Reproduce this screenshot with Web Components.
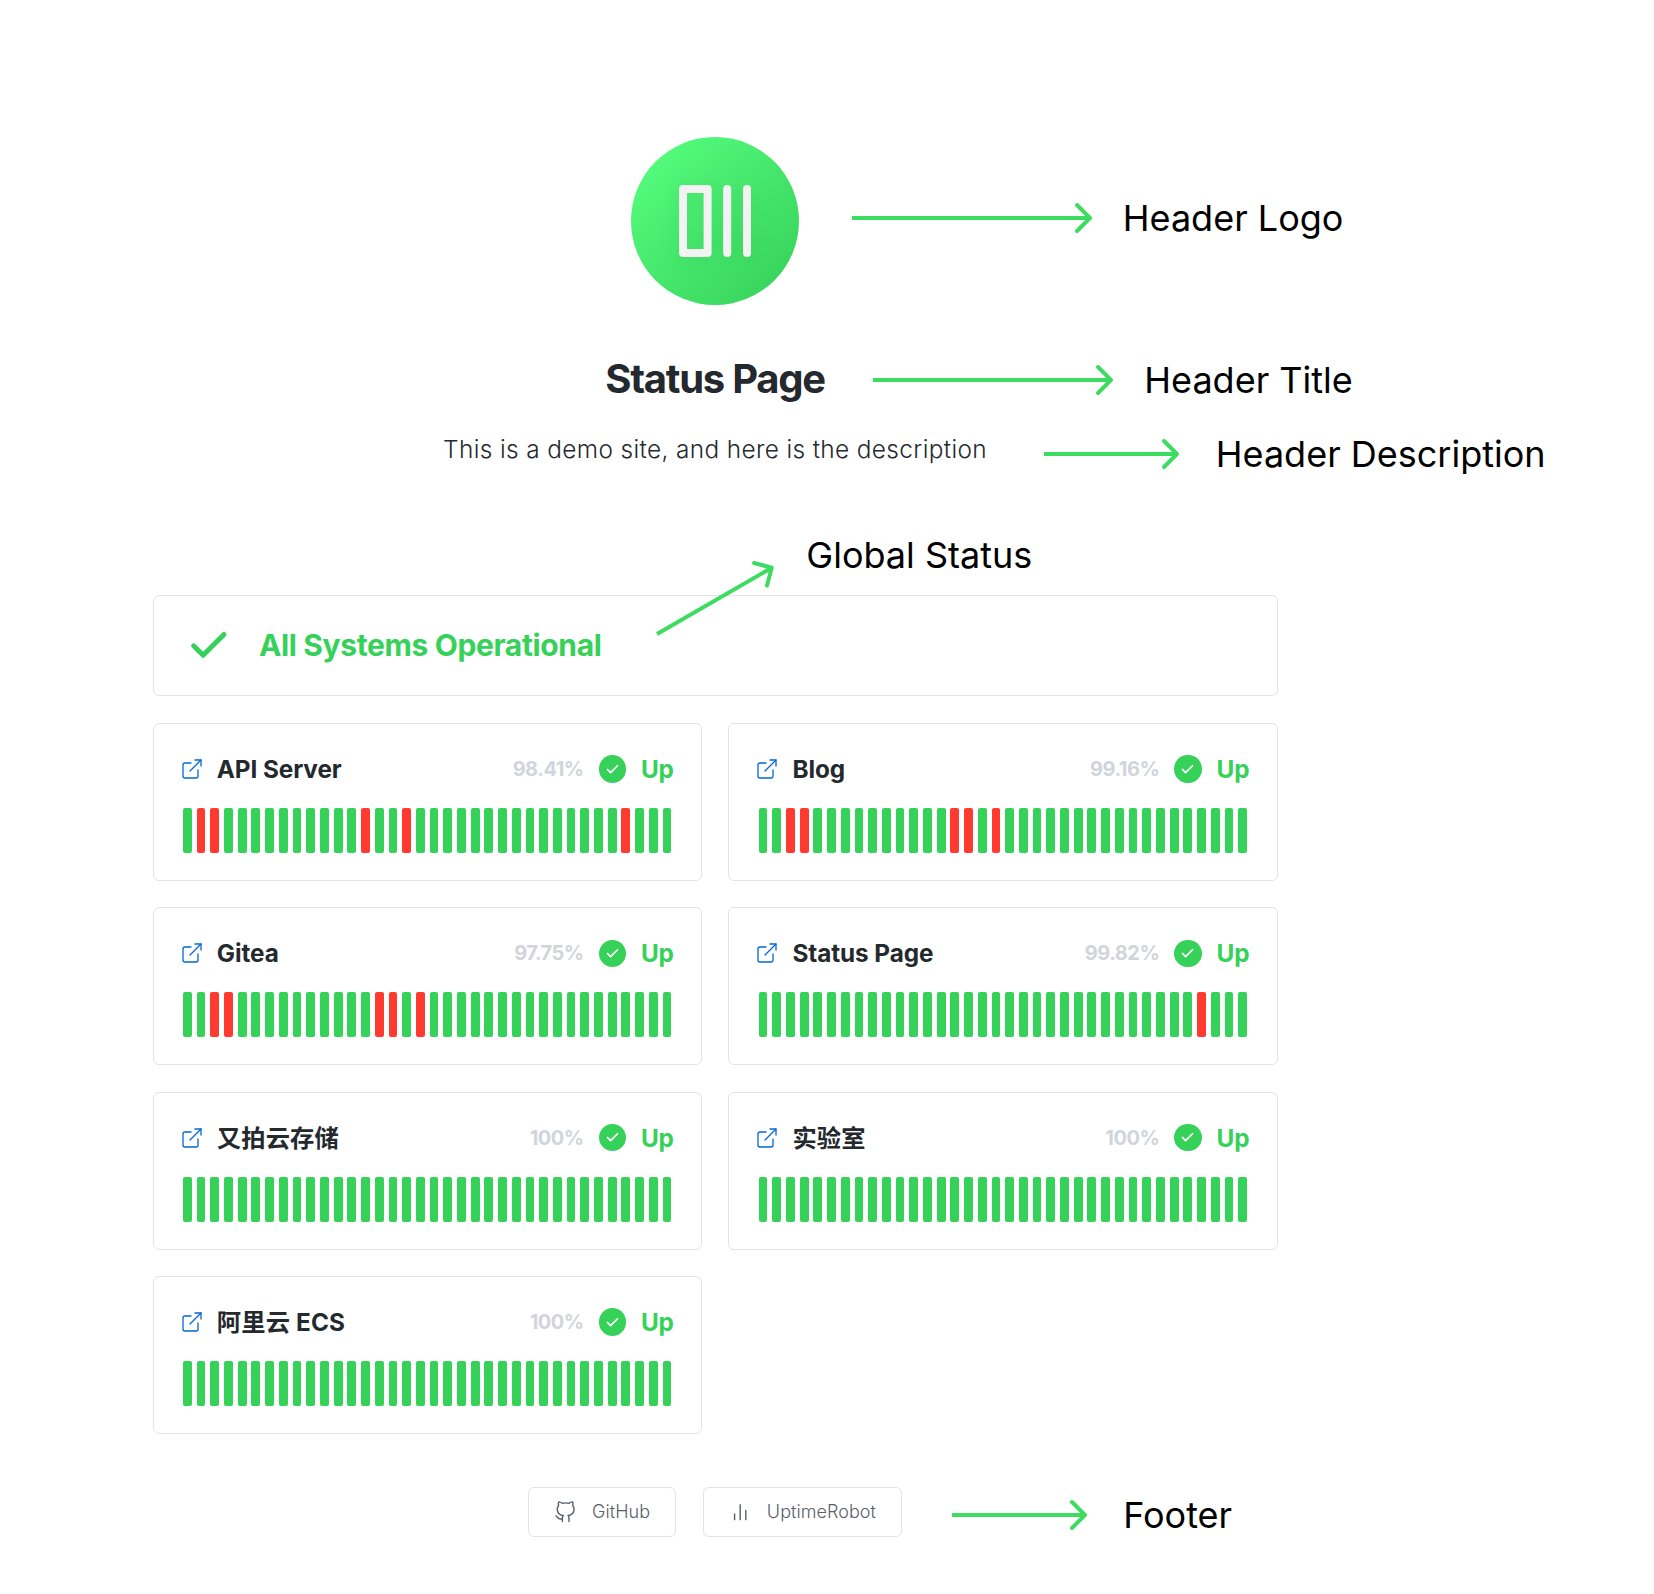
<!DOCTYPE html>
<html lang="en">
<head>
<meta charset="utf-8">
<title>Status Page</title>
<style>
html, body { margin: 0; padding: 0; background: #fff; }
body { font-family: Inter, "Noto Sans CJK SC", sans-serif; color: #24292e; --green: #36d159; --line: #e1e4e8; }
</style>
</head>
<body>
<status-page></status-page>
<script>
const define = (name, html, init) => customElements.define(name, class extends HTMLElement {
  connectedCallback() {
    if (this.shadowRoot) return;
    const root = this.attachShadow({ mode: 'open' });
    const t = document.createElement('template');
    t.innerHTML = html;
    root.append(t.content.cloneNode(true));
    if (init) init(this, root);
  }
});

const ICONS = {
  link: '<path d="M18 13v6a2 2 0 0 1-2 2H5a2 2 0 0 1-2-2V8a2 2 0 0 1 2-2h6"/><path d="M15 3h6v6"/><path d="M10 14 21 3"/>',
  check: '<path d="M20 6 9 17l-5-5"/>',
  github: '<path d="M9 19c-5 1.5-5-2.5-7-3m14 6v-3.87a3.37 3.37 0 0 0-.94-2.61c3.14-.35 6.44-1.54 6.44-7A5.44 5.44 0 0 0 20 4.77 5.07 5.07 0 0 0 19.91 1S18.73.65 16 2.48a13.38 13.38 0 0 0-7 0C6.27.65 5.09 1 5.09 1A5.07 5.07 0 0 0 5 4.77a5.44 5.44 0 0 0-1.5 3.78c0 5.42 3.3 6.61 6.44 7A3.37 3.37 0 0 0 9 18.13V22"/>',
  chart: '<path d="M18 20V10M12 20V4M6 20v-6"/>'
};

define('line-icon', `<style>
:host { display: inline-flex; flex: none; }
svg { display: block; width: 100%; height: 100%; fill: none; stroke: currentColor; stroke-linecap: round; stroke-linejoin: round; }
</style><svg viewBox="0 0 24 24"></svg>`, (el, root) => {
  const svg = root.querySelector('svg');
  svg.innerHTML = ICONS[el.getAttribute('name')];
  svg.style.strokeWidth = el.getAttribute('weight') || '1.5';
});

define('page-header', `<style>
:host { display: flex; flex-direction: column; align-items: center; }
.logo { width: 168px; height: 168px; border-radius: 50%; background: linear-gradient(135deg, #56ff80 4%, #36d159 96%);
  display: flex; align-items: center; justify-content: center; }
.logo svg { display: block; overflow: visible; filter: drop-shadow(0 1px 10px rgba(30,150,60,.16)); }
h1 { margin: 50px 0 0; font-size: 40px; line-height: 48px; font-weight: 700; letter-spacing: -1.26px; }
p { margin: 31px 0 0; font-size: 24.4px; line-height: 30px; font-weight: 350; letter-spacing: .37px; }
</style>
<div class="logo"><svg width="72" height="72" viewBox="0 0 72 72">
<rect x="4" y="4" width="24.6" height="64" fill="none" stroke="#f3f3f3" stroke-width="8" stroke-linejoin="round"/>
<rect x="44.2" y="0" width="8" height="72" rx="4" fill="#f3f3f3"/><rect x="64" y="0" width="8" height="72" rx="4" fill="#f3f3f3"/></svg></div>
<h1><slot name="title"></slot></h1><p><slot name="description"></slot></p>`);

define('global-status', `<style>
:host { box-sizing: border-box; display: flex; align-items: center; gap: 27.2px; height: 101.2px; padding-left: 32.6px;
  border: 1px solid var(--line); border-radius: 6px; color: var(--green);
  font-size: 30px; line-height: 45px; font-weight: 700; letter-spacing: -.37px; }
line-icon { width: 45.6px; height: 45.6px; }
</style><line-icon name="check" weight="2.6"></line-icon><span><slot></slot></span>`);

define('uptime-bars', `<style>
:host { display: flex; justify-content: space-between; height: 45px; }
i { width: 8.8px; border-radius: 2px; background: var(--green); }
i.down { background: #ff3b30; }
</style>`, (el, root) => {
  const down = new Set((el.getAttribute('down') || '').split(',').filter(Boolean).map(Number));
  for (let n = 1; n <= 36; n++) {
    const bar = document.createElement('i');
    if (down.has(n)) bar.className = 'down';
    root.append(bar);
  }
});

define('monitor-card', `<style>
:host { box-sizing: border-box; display: block; height: 157.9px; padding: 30.1px 27.1px 0 26.2px; border: 1px solid var(--line); border-radius: 6px; }
header { display: flex; align-items: center; height: 30px; line-height: 30px; font-size: 24.3px; font-weight: 700; letter-spacing: -.08px; white-space: nowrap; }
.link { width: 24px; height: 24px; color: #0366d6; margin-right: 13px; }
.name { flex: 1; }
.name:lang(zh) { letter-spacing: .15px; }
.ratio { font-size: 20px; letter-spacing: -.5px; color: #d1d5da; margin-right: 15px; }
.badge { display: flex; align-items: center; justify-content: center; width: 27.3px; height: 27.3px; border-radius: 50%; background: var(--green); color: #fff; margin-right: 15px; }
.badge line-icon { width: 15px; height: 15px; }
.up { color: var(--green); }
uptime-bars { margin: 24px 2.4px 0 3.2px; }
</style>
<header><line-icon class="link" name="link" weight="1.3"></line-icon><span class="name"><slot></slot></span>
<span class="ratio"></span><span class="badge"><line-icon name="check" weight="2.8"></line-icon></span><span class="up">Up</span></header>`, (el, root) => {
  root.querySelector('.ratio').textContent = el.getAttribute('ratio');
  const bars = document.createElement('uptime-bars');
  bars.setAttribute('down', el.getAttribute('down') || '');
  root.append(bars);
});

define('footer-link', `<style>
:host { box-sizing: border-box; display: flex; align-items: center; gap: 15.4px; height: 50px; padding: 0 25px; border: 1px solid var(--line); border-radius: 6px;
  color: #586069; font-size: 18px; line-height: 26px; font-weight: 350; letter-spacing: .05px; }
::slotted(line-icon) { width: 22.4px; height: 22.4px; }
</style><slot name="icon"></slot><span><slot></slot></span>`);

define('note-arrow', `<style>
:host { position: absolute; display: block; left: var(--x); top: var(--y); width: 0; height: 0; transform: rotate(var(--turn, 0deg)); }
svg { position: absolute; left: 0; top: -20px; overflow: visible; fill: none; stroke: #3ddc61; stroke-width: 4; }
</style><svg height="40"><path class="shaft"/><path class="head" stroke-linecap="round" stroke-linejoin="round"/></svg>`, (el, root) => {
  const tip = Number(el.getAttribute('length')) - 2;
  root.querySelector('svg').setAttribute('width', tip + 2);
  root.querySelector('.shaft').setAttribute('d', `M0 20H${tip}`);
  root.querySelector('.head').setAttribute('d', `M${tip - 13} 7 ${tip} 20l-13 13`);
});

define('note-label', `<style>
:host { position: absolute; display: block; left: var(--x); top: var(--y); color: #000; font-size: 36px; line-height: 44px; white-space: nowrap; }
</style><slot></slot>`);

define('status-page', `<style>
:host { display: block; position: relative; box-sizing: border-box; width: 1654px; height: 1594px; padding: 137px 0 0 152.6px; overflow: hidden; }
main { width: 1125px; }
global-status { margin: 131px 0 26.8px; }
.grid { display: grid; grid-template-columns: 1fr 1fr; gap: 26.43px 26.3px; }
footer { display: flex; justify-content: center; gap: 27px; margin-top: 53.2px; }
</style>
<main>
<page-header><span slot="title">Status Page</span><span slot="description">This is a demo site, and here is the description</span></page-header>
<global-status>All Systems Operational</global-status>
<section class="grid">
<monitor-card ratio="98.41%" down="2,3,14,17,33">API Server</monitor-card>
<monitor-card ratio="99.16%" down="3,4,15,16,18">Blog</monitor-card>
<monitor-card ratio="97.75%" down="3,4,15,16,18">Gitea</monitor-card>
<monitor-card ratio="99.82%" down="33">Status Page</monitor-card>
<monitor-card ratio="100%" lang="zh-CN">又拍云存储</monitor-card>
<monitor-card ratio="100%" lang="zh-CN">实验室</monitor-card>
<monitor-card ratio="100%" lang="zh-CN">阿里云 ECS</monitor-card>
</section>
<footer>
<footer-link><line-icon slot="icon" name="github" weight="1.5"></line-icon>GitHub</footer-link>
<footer-link><line-icon slot="icon" name="chart" weight="1.5"></line-icon>UptimeRobot</footer-link>
</footer>
</main>
<note-arrow length="240" style="--x:852px;--y:218px"></note-arrow><note-label style="--x:1122.8px;--y:196px">Header Logo</note-label>
<note-arrow length="240" style="--x:873px;--y:380px"></note-arrow><note-label style="--x:1144.3px;--y:358px">Header Title</note-label>
<note-arrow length="135" style="--x:1044px;--y:454px"></note-arrow><note-label style="--x:1215.8px;--y:432px">Header Description</note-label>
<note-arrow length="134.5" style="--x:657px;--y:634.2px;--turn:-30deg"></note-arrow><note-label style="--x:806.3px;--y:533px">Global Status</note-label>
<note-arrow length="135" style="--x:952px;--y:1515px"></note-arrow><note-label style="--x:1123.2px;--y:1493px">Footer</note-label>`);
</script>
</body>
</html>
